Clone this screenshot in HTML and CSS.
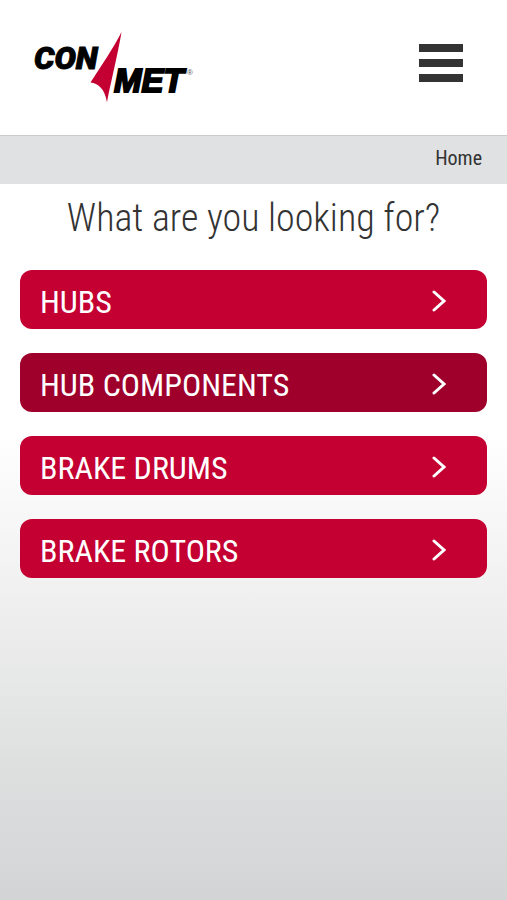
FILE: index.html
```html
<!DOCTYPE html>
<html lang="en">
<head>
<meta charset="utf-8">
<meta name="viewport" content="width=device-width, initial-scale=1">
<title>ConMet</title>
<link rel="stylesheet" href="styles.css">
</head>
<body>
<header class="header">
  <a class="logo" href="#" aria-label="ConMet home">
    <svg class="logo-art" viewBox="0 0 162 74" aria-hidden="true">
      <text class="logo-text logo-con" x="0" y="38">CON</text>
      <path class="logo-sail" d="M87.500 1C80 16 66 37 56.500 51.500C64 52 71 58 73 71.500C75 59 84 23 87.500 1Z"/>
      <text class="logo-text logo-met" x="80" y="61">MET</text>
      <text class="logo-mark" x="153" y="44">®</text>
    </svg>
  </a>
  <button class="menu" type="button" aria-label="Menu">
    <span class="menu-bar"></span>
    <span class="menu-bar"></span>
    <span class="menu-bar"></span>
  </button>
</header>
<nav class="crumbs" aria-label="Breadcrumb"><a class="crumb" href="#">Home</a></nav>
<main class="main">
  <h1 class="title">What are you looking for?</h1>
  <nav class="choices" aria-label="Products">
    <a class="choice" href="#">HUBS<svg class="chevron" viewBox="0 0 14 22" aria-hidden="true"><path d="M2 2L12 11L2 20"/></svg></a>
    <a class="choice choice-active" href="#">HUB COMPONENTS<svg class="chevron" viewBox="0 0 14 22" aria-hidden="true"><path d="M2 2L12 11L2 20"/></svg></a>
    <a class="choice" href="#">BRAKE DRUMS<svg class="chevron" viewBox="0 0 14 22" aria-hidden="true"><path d="M2 2L12 11L2 20"/></svg></a>
    <a class="choice" href="#">BRAKE ROTORS<svg class="chevron" viewBox="0 0 14 22" aria-hidden="true"><path d="M2 2L12 11L2 20"/></svg></a>
  </nav>
</main>
</body>
</html>
```

FILE: styles.css
```css
* {
  box-sizing: border-box;
}

body {
  margin: 0;
  min-height: 100vh;
  background: linear-gradient(#fff 48%, #f0f0f0 66%, #dedfdf 85%, #d2d4d6 100%);
  color: #333;
  font-family: "Roboto Condensed", "Liberation Sans Narrow", sans-serif;
}

a {
  color: inherit;
  text-decoration: none;
}

.header {
  display: flex;
  align-items: flex-start;
  justify-content: space-between;
  height: 135px;
  padding: 31px 44px 0 34px;
  background: #fff;
}

.logo-art {
  display: block;
  width: 162px;
  height: 74px;
}

.logo-text {
  fill: #000;
  stroke: #000;
  stroke-width: 1;
  font-style: italic;
}

.logo-con {
  font-family: Roboto, sans-serif;
  font-size: 32px;
  font-weight: 900;
}

.logo-met {
  stroke-width: 2;
  font-family: "Liberation Sans", sans-serif;
  font-size: 33px;
  font-weight: 700;
}

.logo-mark {
  fill: #555;
  font-family: "Liberation Sans", sans-serif;
  font-size: 8px;
}

.logo-sail {
  fill: #c40032;
}

.menu {
  display: flex;
  flex-direction: column;
  gap: 7px;
  margin: 13px 0 0;
  padding: 0;
  border: 0;
  background: none;
}

.menu-bar {
  width: 44px;
  height: 8px;
  background: #333;
}

.crumbs {
  display: flex;
  align-items: center;
  justify-content: flex-end;
  height: 49px;
  padding: 0 25px 4px;
  border-top: 1px solid #c8cacc;
  background: #e0e1e3;
}

.crumb {
  font-size: 20px;
  line-height: 24px;
}

.main {
  padding: 10px 20px 20px;
}

.title {
  margin: 0 0 28px;
  font-size: 38px;
  font-weight: 300;
  line-height: 48px;
  text-align: center;
}

.choices {
  display: flex;
  flex-direction: column;
  gap: 24px;
}

.choice {
  display: flex;
  align-items: center;
  justify-content: space-between;
  height: 59px;
  padding: 4px 41px 0 20px;
  border-radius: 12px;
  background: #c40032;
  color: #fff;
  font-size: 32px;
  line-height: 36px;
}

.choice-active {
  background: #9e002b;
}

.chevron {
  width: 14px;
  height: 22px;
  margin-bottom: 2px;
  fill: none;
  stroke: #fff;
  stroke-width: 3;
  stroke-linecap: round;
}
```
